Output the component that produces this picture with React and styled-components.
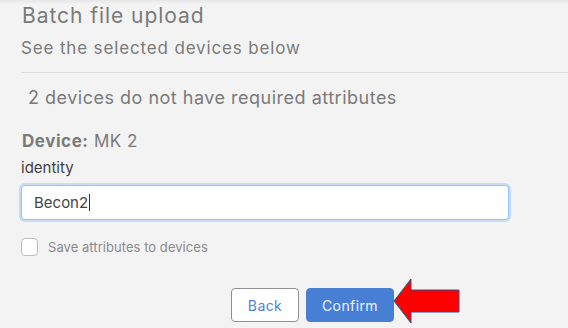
import React from "react";
import styled, { createGlobalStyle } from "styled-components";

const Global = createGlobalStyle`
  html, body { margin: 0; padding: 0; background: #f3f3f3; overflow: hidden; }
  body { font-family: Inter, "Open Sans", sans-serif; }
`;

const Modal = styled.div`
  width: 100%;
  height: 328px;
  box-sizing: border-box;
  background: linear-gradient(#e6e6e6 0px, #f3f3f3 4px);
  padding: 3px 0 0 21px;
  display: flex;
  flex-direction: column;
  font-family: Inter, "Open Sans", sans-serif;
`;

const Title = styled.h1`
  margin: 0 0 0 1px;
  font-size: 21px;
  line-height: 26px;
  font-weight: 400;
  color: #7a7a7a;
  letter-spacing: 0.95px;
`;

const Subtitle = styled.p`
  margin: 8px 0 0 0;
  font-size: 17px;
  line-height: 22px;
  color: #7a7a7a;
  letter-spacing: 0.85px;
`;

const Divider = styled.hr`
  margin: 13px 0 0 0;
  border: 0;
  height: 1px;
  background: #dcdcdc;
`;

const Warning = styled.p`
  margin: 14px 0 0 7px;
  font-size: 18px;
  line-height: 22px;
  color: #7a7a7a;
  letter-spacing: 0.5px;
`;

const DeviceLine = styled.div`
  margin: 21px 0 0 1px;
  font-size: 17px;
  line-height: 22px;
  color: #7a7a7a;
  letter-spacing: 0.55px;
  b { font-weight: 700; }
`;

const FieldLabel = styled.label`
  margin: 6px 0 0 0;
  font-size: 15px;
  line-height: 20px;
  color: #3f3f3f;
`;

const Input = styled.div`
  margin-top: 7px;
  width: 488px;
  height: 35px;
  box-sizing: border-box;
  background: #fff;
  border: 1px solid #92c3fa;
  border-radius: 4px;
  box-shadow: 0 0 0 2px rgba(120, 180, 250, 0.35);
  padding-left: 12px;
  display: flex;
  align-items: center;
  font-size: 15px;
  color: #454545;
`;

const Caret = styled.span`
  display: inline-block;
  width: 1px;
  height: 17px;
  background: #333;
  margin-left: 1px;
`;

const CheckRow = styled.div`
  margin-top: 18px;
  display: flex;
  align-items: center;
  gap: 10px;
`;

const Box = styled.span`
  width: 17px;
  height: 18px;
  box-sizing: border-box;
  border: 1px solid #bdbdbd;
  border-radius: 4px;
  background: #fff;
`;

const CheckLabel = styled.span`
  font-size: 13px;
  color: #8a8a8a;
  letter-spacing: 0.05px;
`;

const Footer = styled.div`
  margin-top: 32px;
  display: flex;
  gap: 7px;
  padding-left: 210px;
`;

const Button = styled.button`
  height: 34px;
  width: ${(p) => p.$w}px;
  box-sizing: border-box;
  border-radius: 4px;
  font-family: inherit;
  font-size: 14px;
  letter-spacing: 0.4px;
  cursor: pointer;
  border: 1px solid ${(p) => (p.$primary ? "#4a7fd4" : "#8f8f8f")};
  background: ${(p) => (p.$primary ? "#477fd4" : "#ffffff")};
  color: ${(p) => (p.$primary ? "#eef3fc" : "#4f84d6")};
`;

const ArrowWrap = styled.div`
  position: relative;
  display: flex;
`;

const Arrow = styled.svg`
  position: absolute;
  left: 100%;
  top: -10px;
  margin-left: -1px;
`;

export default function App() {
  return (
    <>
      <Global />
      <Modal>
        <Title>Batch file upload</Title>
        <Subtitle>See the selected devices below</Subtitle>
        <Divider />
        <Warning>2 devices do not have required attributes</Warning>
        <DeviceLine>
          <b>Device:</b> MK 2
        </DeviceLine>
        <FieldLabel>identity</FieldLabel>
        <Input>
          Becon2
          <Caret />
        </Input>
        <CheckRow>
          <Box />
          <CheckLabel>Save attributes to devices</CheckLabel>
        </CheckRow>
        <Footer>
          <Button $w={68}>Back</Button>
          <ArrowWrap>
            <Button $primary $w={88}>Confirm</Button>
            <Arrow width="68" height="47" viewBox="0 0 68 47">
              <polygon
                points="1,23 18,1 18,12 66,12 66,34 18,34 18,45"
                fill="#ff0000"
                stroke="#2f528f"
                strokeWidth="1"
              />
            </Arrow>
          </ArrowWrap>
        </Footer>
      </Modal>
    </>
  );
}
